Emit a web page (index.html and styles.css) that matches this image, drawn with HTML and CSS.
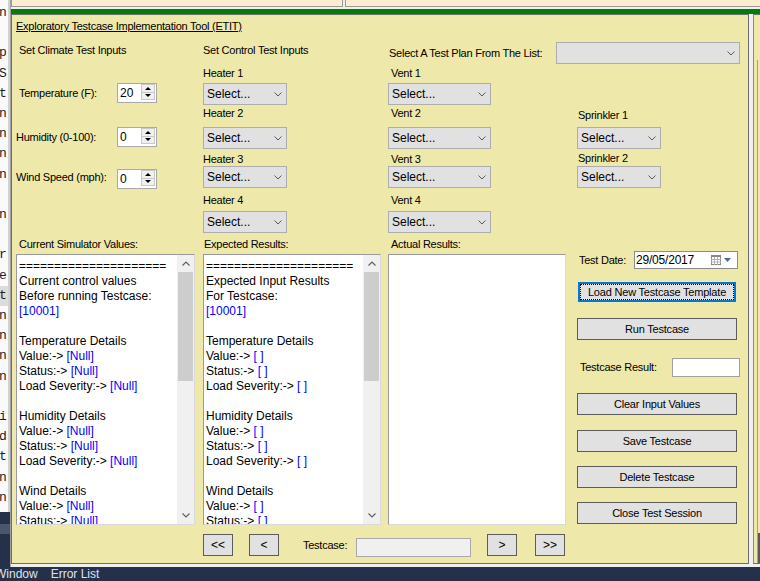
FILE: index.html
```html
<!DOCTYPE html>
<html>
<head>
<meta charset="utf-8">
<title>ETIT</title>
<link rel="stylesheet" href="styles.css">
</head>
<body>
<div class="workspace">
  <div class="code">
    <div class="code-text"><div>n</div><div>&nbsp;</div><div>p</div><div>S</div><div>t</div><div>n</div><div>n</div><div>n</div><div>n</div><div>&nbsp;</div><div>n</div><div>&nbsp;</div><div>r</div><div>e</div><div class="hl">t</div><div>n</div><div>n</div><div>n</div><div>n</div><div>&nbsp;</div><div>i</div><div>d</div><div>t</div><div>n</div><div>n</div></div>
    <div class="code-bottom"><div class="code-band"></div></div>
  </div>
  <div class="main">
    <div class="tabs"><div class="tab tab1"></div><div class="tab tab2"></div></div>
    <div class="green"></div>
    <div class="panels">
      <div class="form">
        <div class="title">Exploratory Testcase Implementation Tool (ETIT)</div>

        <div class="top-grid">
          <div class="lab c1 r1 head pl3">Set Climate Test Inputs</div>
          <div class="lab c2 r1 head">Set Control Test Inputs</div>
          <div class="plan">
            <span class="lab">Select A Test Plan From The List:</span>
            <div class="combo w184"><span></span><svg class="chev" width="8" height="5" viewBox="0 0 8 5"><path d="M0.5 0.5 L4 4 L7.5 0.5" fill="none" stroke="#5a5a5a" stroke-width="1"/></svg></div>
          </div>

          <div class="crow c1 r3">
            <span class="lab clab pl3">Temperature (F):</span>
            <div class="spin"><span class="spin-val">20</span><div class="spin-btns"><div class="spin-btn"><i class="tri-up"></i></div><div class="spin-btn"><i class="tri-down"></i></div></div></div>
          </div>
          <div class="crow c1 r5">
            <span class="lab clab">Humidity (0-100):</span>
            <div class="spin"><span class="spin-val">0</span><div class="spin-btns"><div class="spin-btn"><i class="tri-up"></i></div><div class="spin-btn"><i class="tri-down"></i></div></div></div>
          </div>
          <div class="crow c1 r7 wind">
            <span class="lab clab up2">Wind Speed (mph):</span>
            <div class="spin"><span class="spin-val">0</span><div class="spin-btns"><div class="spin-btn"><i class="tri-up"></i></div><div class="spin-btn"><i class="tri-down"></i></div></div></div>
          </div>

          <div class="lab c2 r2 la">Heater 1</div>
          <div class="combo w84 c2 r3"><span>Select...</span><svg class="chev" width="8" height="5" viewBox="0 0 8 5"><path d="M0.5 0.5 L4 4 L7.5 0.5" fill="none" stroke="#5a5a5a" stroke-width="1"/></svg></div>
          <div class="lab c2 r4 lb">Heater 2</div>
          <div class="combo w84 c2 r5"><span>Select...</span><svg class="chev" width="8" height="5" viewBox="0 0 8 5"><path d="M0.5 0.5 L4 4 L7.5 0.5" fill="none" stroke="#5a5a5a" stroke-width="1"/></svg></div>
          <div class="lab c2 r6 lc">Heater 3</div>
          <div class="combo w84 c2 r7"><span>Select...</span><svg class="chev" width="8" height="5" viewBox="0 0 8 5"><path d="M0.5 0.5 L4 4 L7.5 0.5" fill="none" stroke="#5a5a5a" stroke-width="1"/></svg></div>
          <div class="lab c2 r8 ld">Heater 4</div>
          <div class="combo w84 c2 r9"><span>Select...</span><svg class="chev" width="8" height="5" viewBox="0 0 8 5"><path d="M0.5 0.5 L4 4 L7.5 0.5" fill="none" stroke="#5a5a5a" stroke-width="1"/></svg></div>

          <div class="lab c3 r2 la pl3">Vent 1</div>
          <div class="combo w103 c3 r3"><span>Select...</span><svg class="chev" width="8" height="5" viewBox="0 0 8 5"><path d="M0.5 0.5 L4 4 L7.5 0.5" fill="none" stroke="#5a5a5a" stroke-width="1"/></svg></div>
          <div class="lab c3 r4 lb pl3">Vent 2</div>
          <div class="combo w103 c3 r5"><span>Select...</span><svg class="chev" width="8" height="5" viewBox="0 0 8 5"><path d="M0.5 0.5 L4 4 L7.5 0.5" fill="none" stroke="#5a5a5a" stroke-width="1"/></svg></div>
          <div class="lab c3 r6 lc pl3">Vent 3</div>
          <div class="combo w103 c3 r7"><span>Select...</span><svg class="chev" width="8" height="5" viewBox="0 0 8 5"><path d="M0.5 0.5 L4 4 L7.5 0.5" fill="none" stroke="#5a5a5a" stroke-width="1"/></svg></div>
          <div class="lab c3 r8 ld pl3">Vent 4</div>
          <div class="combo w103 c3 r9"><span>Select...</span><svg class="chev" width="8" height="5" viewBox="0 0 8 5"><path d="M0.5 0.5 L4 4 L7.5 0.5" fill="none" stroke="#5a5a5a" stroke-width="1"/></svg></div>

          <div class="lab c4 r4 ls1 pl1">Sprinkler 1</div>
          <div class="combo w84 c4 r5"><span>Select...</span><svg class="chev" width="8" height="5" viewBox="0 0 8 5"><path d="M0.5 0.5 L4 4 L7.5 0.5" fill="none" stroke="#5a5a5a" stroke-width="1"/></svg></div>
          <div class="lab c4 r6 ls2 pl1">Sprinkler 2</div>
          <div class="combo w84 c4 r7"><span>Select...</span><svg class="chev" width="8" height="5" viewBox="0 0 8 5"><path d="M0.5 0.5 L4 4 L7.5 0.5" fill="none" stroke="#5a5a5a" stroke-width="1"/></svg></div>
        </div>

        <div class="lower">
          <div class="lab c1 lr1 pl3">Current Simulator Values:</div>
          <div class="lab c2 lr1 pl1">Expected Results:</div>
          <div class="lab c3 lr1 pl3">Actual Results:</div>

          <div class="tb c1 lr2 w179">
            <div class="tb-text">=====================
Current control values
Before running Testcase:
<span class="v">[10001]</span>

Temperature Details
Value:-&gt; <span class="v">[Null]</span>
Status:-&gt; <span class="v">[Null]</span>
Load Severity:-&gt; <span class="v">[Null]</span>

Humidity Details
Value:-&gt; <span class="v">[Null]</span>
Status:-&gt; <span class="v">[Null]</span>
Load Severity:-&gt; <span class="v">[Null]</span>

Wind Details
Value:-&gt; <span class="v">[Null]</span>
Status:-&gt; <span class="v">[Null]</span>
Load Severity:-&gt; <span class="v">[Null]</span></div>
            <div class="vs">
              <div class="vs-btn"><svg width="8" height="5" viewBox="0 0 8 5"><path d="M0.5 4.5 L4 1 L7.5 4.5" fill="none" stroke="#606060" stroke-width="1.2"/></svg></div>
              <div class="vs-track"><div class="vs-thumb"></div></div>
              <div class="vs-btn"><svg width="8" height="5" viewBox="0 0 8 5"><path d="M0.5 0.5 L4 4 L7.5 0.5" fill="none" stroke="#606060" stroke-width="1.2"/></svg></div>
            </div>
          </div>

          <div class="tb c2 lr2 w178">
            <div class="tb-text">=====================
Expected Input Results
For Testcase:
<span class="v">[10001]</span>

Temperature Details
Value:-&gt; <span class="v">[ ]</span>
Status:-&gt; <span class="v">[ ]</span>
Load Severity:-&gt; <span class="v">[ ]</span>

Humidity Details
Value:-&gt; <span class="v">[ ]</span>
Status:-&gt; <span class="v">[ ]</span>
Load Severity:-&gt; <span class="v">[ ]</span>

Wind Details
Value:-&gt; <span class="v">[ ]</span>
Status:-&gt; <span class="v">[ ]</span>
Load Severity:-&gt; <span class="v">[ ]</span></div>
            <div class="vs">
              <div class="vs-btn"><svg width="8" height="5" viewBox="0 0 8 5"><path d="M0.5 4.5 L4 1 L7.5 4.5" fill="none" stroke="#606060" stroke-width="1.2"/></svg></div>
              <div class="vs-track"><div class="vs-thumb"></div></div>
              <div class="vs-btn"><svg width="8" height="5" viewBox="0 0 8 5"><path d="M0.5 0.5 L4 4 L7.5 0.5" fill="none" stroke="#606060" stroke-width="1.2"/></svg></div>
            </div>
          </div>

          <div class="tb c3 lr2 w178"></div>

          <div class="rc">
            <div class="date-row">
              <span class="lab">Test Date:</span>
              <div class="date"><span>29/05/2017</span>
                <svg width="10" height="10" viewBox="0 0 10 10" class="cal"><rect x="0.5" y="0.5" width="9" height="9" fill="#fff" stroke="#8a8a8a"/><rect x="0" y="0" width="10" height="2" fill="#8a8a8a"/><path d="M0 4.5H10M0 7H10M3.5 2V10M6.5 2V10" stroke="#b4b4b4" stroke-width="1"/></svg>
                <svg width="7" height="4" viewBox="0 0 7 4" class="dd"><polygon points="0,0 7,0 3.5,4" fill="#4e6a92"/></svg>
              </div>
            </div>
            <div class="btn focus"><div class="ring">Load New Testcase Template</div></div>
            <div class="btn b-run">Run Testcase</div>
            <div class="result-row">
              <span class="lab">Testcase Result:</span>
              <div class="result-box"></div>
            </div>
            <div class="btn b-clear">Clear Input Values</div>
            <div class="btn b-save">Save Testcase</div>
            <div class="btn b-del">Delete Testcase</div>
            <div class="btn b-del">Close Test Session</div>
          </div>
        </div>

        <div class="nav">
          <div class="nbtn">&lt;&lt;</div>
          <div class="nbtn n-prev">&lt;</div>
          <span class="lab nav-lab">Testcase:</span>
          <div class="nav-tb"></div>
          <div class="nbtn n-next">&gt;</div>
          <div class="nbtn n-last">&gt;&gt;</div>
        </div>
      </div>
      <div class="side"><div class="side-line"><div class="side-dark"></div></div></div>
    </div>
  </div>
</div>
<div class="status"><span class="st-first">Window</span><span>Error List</span></div>
</body>
</html>
```

FILE: styles.css
```css
* { box-sizing: border-box; }
html, body { margin: 0; padding: 0; }
body {
  width: 760px; height: 581px; overflow: hidden;
  background: #f0f0f0;
  font-family: "Liberation Sans", Arial, sans-serif;
  font-size: 11px; color: #000;
  display: flex; flex-direction: column;
}
.workspace { height: 567px; display: flex; }

/* code editor strip on the left */
.code { width: 11px; display: flex; flex-direction: column; border-right: 1px solid #a0a0a0; }
.code-text {
  height: 512px; background: #fafafa; border-right: 2px solid #d2d2d2;
  font-family: "Liberation Mono", monospace; font-size: 13px; line-height: 20.2px;
  padding-top: 3px; overflow: hidden; color: #1e1e1e; white-space: nowrap;
}
.code-text div { margin-left: -1px; }
.code-text .hl { background: #dcdcdc; }
.code-bottom { flex: 1; background: #25314a; padding-top: 12px; }
.code-band { height: 10px; background: #4a566c; }

.main { flex: 1; display: flex; flex-direction: column; }
.tabs { height: 7px; display: flex; gap: 2px; }
.tab { background: #ffebcd; border: 1px solid #9a9a9a; border-top: none; }
.tab1 { width: 332px; }
.tab2 { flex: 1; border-right: none; }
.green { margin-top: 2px; height: 5px; background: #008000; }
.panels { height: 550px; display: flex; }

.form {
  width: 738px; background: #eee8aa; border: 1px solid #6d6d6d;
  padding-left: 4px; display: flex; flex-direction: column;
}
.title { margin-top: 4px; line-height: 14px; text-decoration: underline; letter-spacing: -0.25px; white-space: nowrap; }

.lab { line-height: 13px; white-space: nowrap; letter-spacing: -0.25px; }
.pl1 { padding-left: 1px; }
.pl3 { padding-left: 3px; }

.top-grid {
  margin-top: 7px;
  display: grid;
  grid-template-columns: 187px 185px 189px 163px;
  grid-template-rows: 26px 17px 22px 22px 22px 17px 22px 23px 22px;
}
.c1 { grid-column: 1; } .c2 { grid-column: 2; } .c3 { grid-column: 3; } .c4 { grid-column: 4; }
.r1 { grid-row: 1; } .r2 { grid-row: 2; } .r3 { grid-row: 3; } .r4 { grid-row: 4; } .r5 { grid-row: 5; }
.r6 { grid-row: 6; } .r7 { grid-row: 7; } .r8 { grid-row: 8; } .r9 { grid-row: 9; }
.head { align-self: start; margin-top: 4px; }
.la { align-self: end; margin-bottom: 3px; }
.lb { align-self: start; margin-top: 2px; }
.lc { align-self: end; }
.ld { align-self: start; margin-top: 6px; }
.ls1 { align-self: start; margin-top: 4px; }
.ls2 { align-self: end; margin-bottom: 1px; }

.plan {
  grid-column: 3 / 5; grid-row: 1; align-self: start; margin-top: 2px;
  height: 22px; display: flex; align-items: center; justify-content: space-between; padding-left: 1px;
}

.combo {
  height: 22px; display: flex; align-items: center; justify-content: space-between;
  background: #e1e1e1; border: 1px solid #adadad; padding: 0 4px 0 3px;
  font-size: 12px; white-space: nowrap;
}
.w84 { width: 84px; } .w103 { width: 103px; } .w184 { width: 184px; }
.chev { display: block; }

.crow { align-self: start; height: 20px; display: flex; align-items: center; }
.wind { margin-top: 3px; }
.clab { width: 101px; }
.up2 { margin-bottom: 4px; }
.spin { width: 40px; height: 20px; background: #fff; border: 1px solid #a9a9a9; display: flex; }
.spin-val { flex: 1; font-size: 12px; line-height: 18px; padding-left: 2px; }
.spin-btns { width: 15px; display: flex; flex-direction: column; padding: 0 1px 2px 0; }
.spin-btn { flex: 1; background: #f0f0f0; border: 1px solid #c8c8c8; display: flex; align-items: center; justify-content: center; }
.spin-btn + .spin-btn { border-top: none; }
.tri-up { width: 0; height: 0; border-left: 3px solid transparent; border-right: 3px solid transparent; border-bottom: 3px solid #000; }
.tri-down { width: 0; height: 0; border-left: 3px solid transparent; border-right: 3px solid transparent; border-top: 3px solid #000; }

.lower {
  margin-top: 5px;
  display: grid;
  grid-template-columns: 187px 185px 189px 163px;
  grid-template-rows: 16px 271px;
}
.lr1 { grid-row: 1; align-self: start; }
.lr2 { grid-row: 2; }
.w179 { width: 179px; } .w178 { width: 178px; }
.tb {
  background: #fff; border: 1px solid; border-color: #9a9a9a #dadada #dadada #9a9a9a;
  display: flex; overflow: hidden;
}
.tb-text {
  flex: 1; padding: 4px 0 0 2px; font-size: 12px; line-height: 15px;
  white-space: pre; overflow: hidden;
}
.v { color: #0000ff; }
.vs { width: 17px; background: #f0f0f0; display: flex; flex-direction: column; }
.vs-btn { height: 17px; display: flex; align-items: center; justify-content: center; }
.vs-track { flex: 1; }
.vs-thumb { height: 109px; background: #cdcdcd; margin: 0 1px; }

.rc { grid-column: 4; grid-row: 1 / 3; display: flex; flex-direction: column; }
.date-row { margin-top: 13px; height: 18px; display: flex; align-items: center; justify-content: space-between; padding: 0 2px; }
.date {
  width: 104px; height: 18px; background: #fff; border: 1px solid #8c8c8c;
  display: flex; align-items: center; padding: 0 6px 0 1px;
  font-size: 12px; letter-spacing: -0.2px;
}
.date span { flex: 1; }
.cal { display: block; margin-right: 3px; }
.dd { display: block; }

.btn {
  width: 160px; height: 22px; background: #e1e1e1; border: 1px solid #5c5c5c;
  display: flex; align-items: center; justify-content: center;
  letter-spacing: -0.2px; white-space: nowrap;
}
.btn.focus { width: 158px; height: 20px; margin: 13px 0 0 1px; border: 2px solid #0078d7; }
.ring { align-self: stretch; flex: 1; border: 1px dotted #000; display: flex; align-items: center; justify-content: center; }
.b-run { margin-top: 16px; }
.result-row { margin-top: 18px; height: 19px; display: flex; align-items: center; justify-content: space-between; padding-left: 3px; }
.result-box { width: 68px; height: 19px; background: #fff; border: 1px solid #a0a0a0; }
.b-clear { margin-top: 16px; }
.b-save { margin-top: 15px; }
.b-del { margin-top: 14px; }

.nav { margin-top: 9px; height: 23px; display: flex; align-items: flex-start; padding-left: 187px; }
.nbtn {
  width: 30px; height: 22px; background: #e1e1e1; border: 1px solid #5c5c5c;
  display: flex; align-items: center; justify-content: center; font-size: 12px;
}
.n-prev { margin-left: 16px; }
.nav-lab { width: 53px; margin-left: 24px; margin-top: 5px; }
.nav-tb { width: 115px; height: 19px; margin-top: 4px; background: #f0f0f0; border: 1px solid #a9a9a9; }
.n-next { margin-left: 16px; }
.n-last { margin-left: 18px; }

.side {
  flex: 1; margin-left: 4px; background: #eee8aa;
  border-left: 1px solid #8a8a8a; border-top: 1px solid #6d6d6d; border-bottom: 1px solid #6d6d6d;
  display: flex; flex-direction: column;
}
.side-line { margin: 45px 0 0 3px; flex: 1; border-left: 1px solid #a0a0a0; display: flex; flex-direction: column; justify-content: flex-end; }
.side-dark { height: 30px; background: #5a5a5a; }

.status {
  height: 14px; background: #25314a; color: #dfe3ea;
  font-size: 12px; line-height: 14px; display: flex; gap: 13px; white-space: nowrap;
}
.st-first { margin-left: -5px; }
```
